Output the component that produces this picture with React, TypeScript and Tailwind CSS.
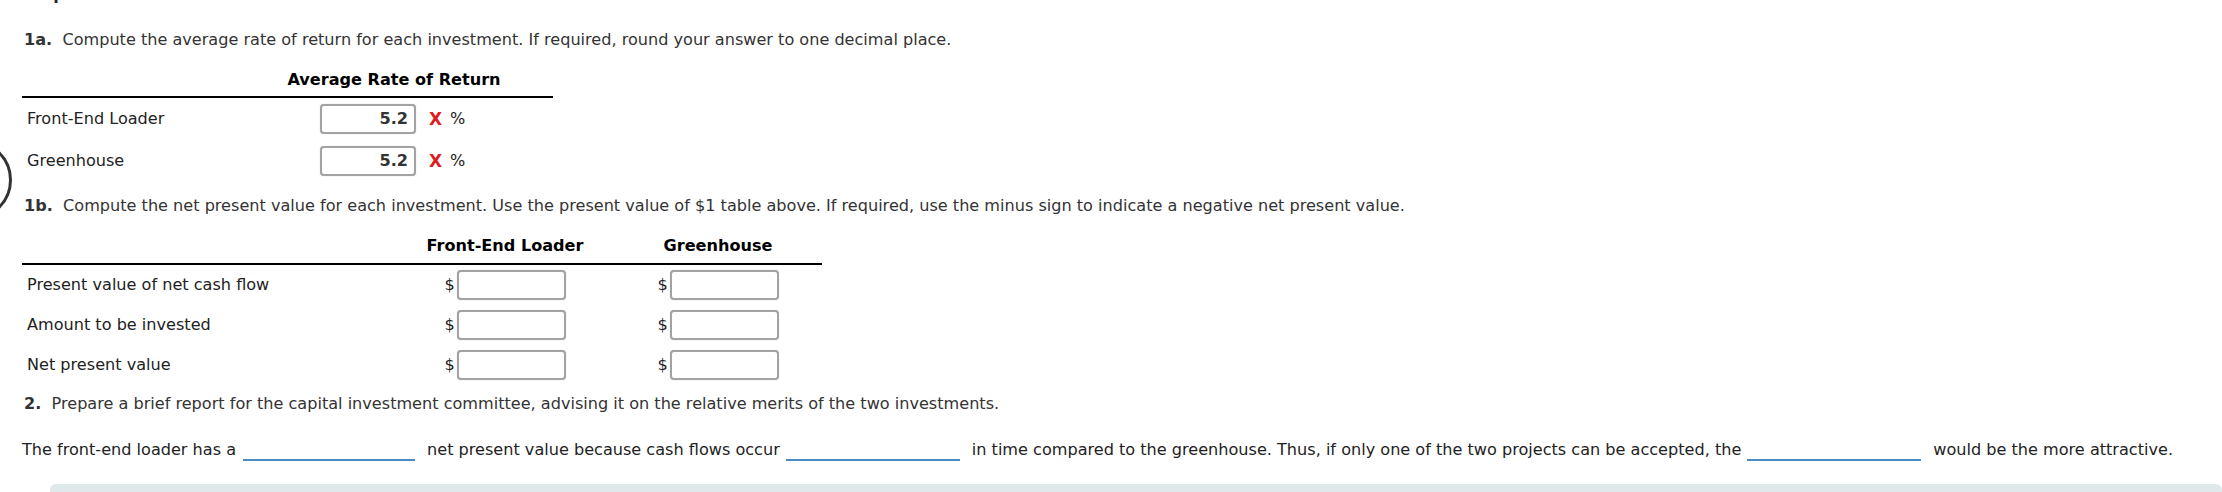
import React from 'react';

const font = { fontFamily: '"DejaVu Sans", Verdana, sans-serif' };

const RateBox = ({ value }: { value: string }) => (
    <div className="flex items-center">
        <div className="w-[96px] h-[30px] border-2 border-[#a3a3a3] rounded-[4px] bg-white flex items-center justify-end pr-[6px] font-bold text-[#333] shadow-[0_0_1px_rgba(0,0,0,0.3)]">
            {value}
        </div>
        <span className="ml-[13px] text-[#e01b1b] font-bold text-[17px]">X</span>
        <span className="ml-[8px] text-[#222]">%</span>
    </div>
);

const MoneyBox = () => (
    <div className="flex items-center">
        <span className="text-[#222] mr-[2px]">$</span>
        <div className="w-[109px] h-[30px] border-2 border-[#a3a3a3] rounded-[4px] bg-white shadow-[0_0_1px_rgba(0,0,0,0.3)]" />
    </div>
);

// answer blank (dropdown placeholder)
const Blank = ({ w, ml }: { w: string; ml: string }) => (
    <span className={`inline-block align-[-6px] h-[20px] border-b-2 border-[#4a8bc4] mr-[12px] ${ml} ${w}`} />
);

export default function App() {
    const npvRows = ['Present value of net cash flow', 'Amount to be invested', 'Net present value'];

    return (
        <div className="bg-white min-h-screen overflow-hidden relative text-[16.1px] leading-[24px] text-[#333]" style={font}>
            {/* partly hidden step circle at the left edge */}
            <div className="absolute left-[-68px] top-[140px] w-[80px] h-[80px] rounded-full border-[3px] border-[#333]" />

            <div className="pl-[22px]">
                <div className="h-[5px] overflow-hidden">
                    <div className="-mt-[17px] pl-[2px] font-bold text-[#222]">Required:</div>
                </div>

                {/* 1a */}
                <p className="mt-[23px] pl-[2px]">
                    <span className="font-bold">1a.</span>&nbsp; Compute the average rate of return for each investment. If required, round your answer to one decimal place.
                </p>

                <div className="mt-[16px] w-[531px]">
                    <div className="flex h-[30px] border-b-2 border-black">
                        <div className="w-[298px] shrink-0" />
                        <div className="w-[148px] shrink-0 text-center font-bold text-black whitespace-nowrap flex justify-center">
                            Average Rate of Return
                        </div>
                    </div>
                    {[
                        ['Front-End Loader', '5.2'],
                        ['Greenhouse', '5.2'],
                    ].map(([label, val]) => (
                        <div key={label} className="flex items-center h-[42px]">
                            <div className="w-[298px] pl-[5px] text-[#222]">{label}</div>
                            <RateBox value={val} />
                        </div>
                    ))}
                </div>

                {/* 1b */}
                <p className="mt-[12px] pl-[2px]">
                    <span className="font-bold">1b.</span>&nbsp; Compute the net present value for each investment. Use the present value of $1 table above. If required, use the minus sign to indicate a negative net present value.
                </p>

                <div className="mt-[16px] w-[800px]">
                    <div className="flex h-[31px] border-b-2 border-black">
                        <div className="w-[374px]" />
                        <div className="w-[218px] text-center font-bold text-black">Front-End Loader</div>
                        <div className="w-[208px] text-center font-bold text-black">Greenhouse</div>
                    </div>
                    {npvRows.map((label) => (
                        <div key={label} className="flex items-center h-[40px]">
                            <div className="w-[374px] pl-[5px] text-[#222]">{label}</div>
                            <div className="w-[218px] flex justify-center">
                                <MoneyBox />
                            </div>
                            <div className="w-[208px] flex justify-center">
                                <MoneyBox />
                            </div>
                        </div>
                    ))}
                </div>

                {/* 2 */}
                <p className="mt-[7px] pl-[2px]">
                    <span className="font-bold">2.</span>&nbsp; Prepare a brief report for the capital investment committee, advising it on the relative merits of the two investments.
                </p>

                <p className="mt-[22px] h-[24px] whitespace-nowrap text-[#222]">
                    The front-end loader has a
                    <Blank w="w-[172px]" ml="ml-[7px]" />
                    net present value because cash flows occur
                    <Blank w="w-[174px]" ml="ml-[6px]" />
                    in time compared to the greenhouse. Thus, if only one of the two projects can be accepted, the
                    <Blank w="w-[174px]" ml="ml-[6px]" />
                    would be the more attractive.
                </p>

                <div className="mt-[22px] ml-[28px] h-[48px] rounded-[6px] bg-[#dfe8eb]" />
            </div>
        </div>
    );
}
